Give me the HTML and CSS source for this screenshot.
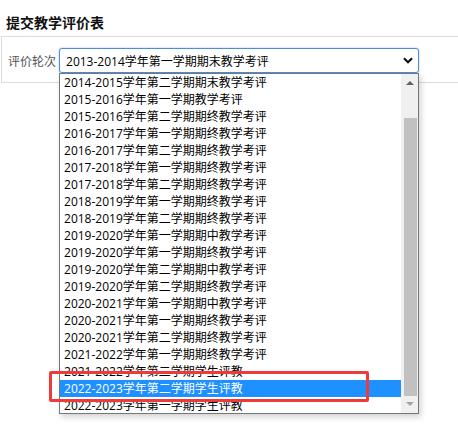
FILE: index.html
```html
<!DOCTYPE html>
<html lang="zh-CN">
<head>
    <meta charset="UTF-8">
    <meta name="viewport" content="width=device-width, initial-scale=1.0">
    <title>提交教学评价表</title>
    <link rel="stylesheet" href="styles.css">
</head>
<body>
    <h3 class="title">提交教学评价表</h3>
    <div class="panel">
        <div class="field">
            <span class="field-label">评价轮次</span>
            <div class="select-wrap">
                <div class="select-box">
                    <span>2013-2014学年第一学期期末教学考评</span>
                    <svg class="chevron" width="10" height="7" viewBox="0 0 10 7">
                        <polyline points="1,1.2 5,5.2 9,1.2" fill="none" stroke="#111" stroke-width="2.2"/>
                    </svg>
                </div>

                <!-- lista aberta do select -->
                <div class="dropdown">
                    <ul class="options">
                        <li>2014-2015学年第二学期期末教学考评</li>
                        <li>2015-2016学年第一学期教学考评</li>
                        <li>2015-2016学年第二学期期终教学考评</li>
                        <li>2016-2017学年第一学期期终教学考评</li>
                        <li>2016-2017学年第二学期期终教学考评</li>
                        <li>2017-2018学年第一学期期终教学考评</li>
                        <li>2017-2018学年第二学期期终教学考评</li>
                        <li>2018-2019学年第一学期期终教学考评</li>
                        <li>2018-2019学年第二学期期终教学考评</li>
                        <li>2019-2020学年第一学期期中教学考评</li>
                        <li>2019-2020学年第一学期期终教学考评</li>
                        <li>2019-2020学年第二学期期中教学考评</li>
                        <li>2019-2020学年第二学期期终教学考评</li>
                        <li>2020-2021学年第一学期期中教学考评</li>
                        <li>2020-2021学年第一学期期终教学考评</li>
                        <li>2020-2021学年第二学期期终教学考评</li>
                        <li>2021-2022学年第一学期期终教学考评</li>
                        <li>2021-2022学年第二学期学生评教</li>
                        <li class="active">2022-2023学年第二学期学生评教</li>
                        <li>2022-2023学年第一学期学生评教</li>
                    </ul>
                    <div class="scrollbar">
                        <span class="arrow arrow-up"></span>
                        <span class="thumb"></span>
                        <span class="arrow arrow-down"></span>
                    </div>
                </div>

                <div class="mark"></div>
            </div>
        </div>
    </div>
</body>
</html>
```

FILE: styles.css
```css
html, body {
    min-height: 436px;
}

body {
    font-family: "Open Sans", "Noto Sans CJK SC", sans-serif;
    background-color: #fff;
    color: #000;
    margin: 0;
    padding: 0;
}

.title {
    margin: 0;
    padding: 13px 6px 3px;
    font-size: 14px;
    line-height: 20px;
    font-weight: bold;
    color: #111;
}

.panel {
    margin-left: 1px;
    padding: 11px 6px 9px;
    border: 1px solid #dcdcdc;
    border-right: none;
}

.field {
    display: flex;
    align-items: center;
    gap: 3px;
}

.field-label {
    font-size: 12px;
    color: #555;
}

.select-wrap {
    position: relative;
    width: 360px;
}

.select-box {
    display: flex;
    align-items: center;
    justify-content: space-between;
    box-sizing: border-box;
    height: 25px;
    padding: 0 5px 0 6px;
    border: 1px solid #4a8fd8;
    border-radius: 3px;
    box-shadow: 0 0 2px rgba(74, 143, 216, 0.6);
    font-size: 12px;
    background-color: #fff;
}

.chevron {
    display: block;
}

.dropdown {
    position: absolute;
    top: 25px;
    left: 0;
    z-index: 2;
    box-sizing: border-box;
    width: 360px;
    height: 341px;
    display: flex;
    border: 1px solid #777;
    background-color: #fff;
    box-shadow: 2px 3px 6px rgba(0, 0, 0, 0.18);
    overflow: hidden;
}

.options {
    flex: 1;
    margin: 0;
    padding: 0;
    list-style: none;
}

.options li {
    height: 17px;
    line-height: 17px;
    padding-left: 4px;
    font-size: 12px;
    white-space: nowrap;
}

.options li.active {
    background-color: #1e90ff;
    color: #fff;
}

.scrollbar {
    width: 17px;
    display: flex;
    flex-direction: column;
    align-items: center;
    background-color: #f0f0f0;
}

.arrow {
    width: 0;
    height: 0;
    border-left: 4px solid transparent;
    border-right: 4px solid transparent;
}

.arrow-up {
    margin: 7px 0 6px;
    border-bottom: 4px solid #606060;
}

.arrow-down {
    margin: 6px 0 7px;
    border-top: 4px solid #a3a3a3;
}

.thumb {
    flex: 1;
    width: 13px;
    margin: 27px 0 0 2px;
    background-color: #c1c1c1;
}

/* destaque vermelho sobre a opção escolhida */
.mark {
    position: absolute;
    left: -10px;
    top: 323px;
    z-index: 3;
    box-sizing: border-box;
    width: 320px;
    height: 31px;
    border: 3px solid #f03a3a;
    border-radius: 2px;
}
```
